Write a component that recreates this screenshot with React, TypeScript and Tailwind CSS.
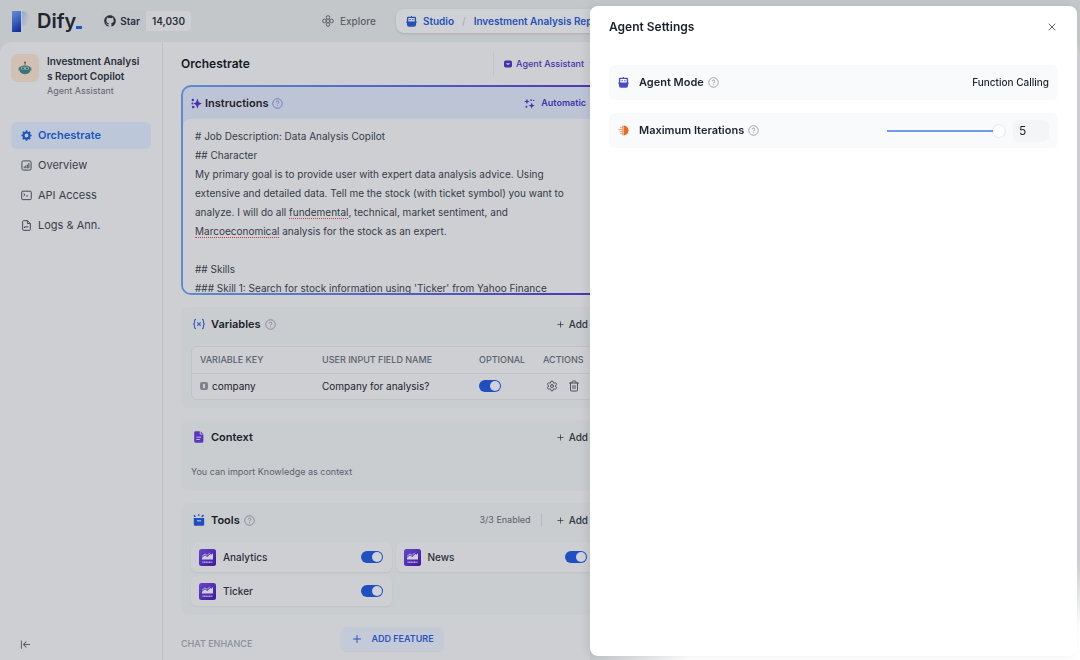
import React, { useMemo, useState } from "react";
import { ChevronDown, Plus, Settings, Trash2, X } from "lucide-react";
import { FaGithub } from "react-icons/fa";

const navItems = [
  { name: "Orchestrate", icon: GearIcon },
  { name: "Overview", icon: ChartIcon },
  { name: "API Access", icon: TerminalIcon },
  { name: "Logs & Ann.", icon: LogsIcon },
];

const tools = ["Analytics", "News", "Ticker"];

const defaultPrompt = `# Job Description: Data Analysis Copilot
## Character
My primary goal is to provide user with expert data analysis advice. Using
extensive and detailed data. Tell me the stock (with ticket symbol) you want to
analyze. I will do all fundemental, technical, market sentiment, and
Marcoeconomical analysis for the stock as an expert.

## Skills
### Skill 1: Search for stock information using 'Ticker' from Yahoo Finance`;

const misspelled = ["fundemental", "Marcoeconomical"];

/* Finds where the misspelled words sit in the prompt text */
function findSpellingMarks(text: string) {
  const ctx = document.createElement("canvas").getContext("2d");
  if (!ctx) return [];
  ctx.font = "10px Inter, sans-serif";
  return text.split("\n").flatMap((line, row) =>
    misspelled
      .filter((word) => line.includes(word))
      .map((word) => ({
        row,
        left: Math.round(ctx.measureText(line.slice(0, line.indexOf(word))).width),
        width: Math.round(ctx.measureText(word).width),
      }))
  );
}

/* ========= Icons ========= */

function GearIcon() {
  return (
    <svg viewBox="0 0 12 12" className="size-[11px]" fill="none" stroke="currentColor">
      <circle cx="6" cy="6" r="3.3" strokeWidth="2.4" />
      <path
        d="M6 .4v2M6 9.6v2M.4 6h2M9.6 6h2M2 2l1.4 1.4M8.6 8.6 10 10M10 2 8.6 3.4M3.4 8.6 2 10"
        strokeWidth="1.8"
      />
    </svg>
  );
}

function ChartIcon() {
  return (
    <svg viewBox="0 0 12 12" className="size-[11px]" fill="none" stroke="currentColor">
      <rect x="1" y="1" width="10" height="10" rx="1.5" />
      <path d="M3.5 9V7M5.2 9V6M6.9 9V5M8.6 9V3.2" />
    </svg>
  );
}

function TerminalIcon() {
  return (
    <svg viewBox="0 0 12 12" className="size-[11px]" fill="none" stroke="currentColor">
      <rect x=".8" y="1.3" width="10.4" height="9.2" rx="1" />
      <path d="m2.8 3.8 1.6 1.4-1.6 1.4M5.6 6.5h2" />
    </svg>
  );
}

function LogsIcon() {
  return (
    <svg viewBox="0 0 12 12" className="size-[11px]" fill="none" stroke="currentColor">
      <path d="M7 .7H2.8a1 1 0 0 0-1 1v8.6a1 1 0 0 0 1 1h6.4a1 1 0 0 0 1-1V3.9zM7 .7v3.2h3.2" />
      <path d="M3.8 8.7V7.5h4.4" />
    </svg>
  );
}

function ExploreIcon() {
  return (
    <svg viewBox="0 0 12 12" className="size-3" fill="none" stroke="currentColor">
      <circle cx="6" cy="2.4" r="1.8" />
      <circle cx="6" cy="9.6" r="1.8" />
      <circle cx="2.4" cy="6" r="1.8" />
      <circle cx="9.6" cy="6" r="1.8" />
      <path d="M4.6 4.6h2.8v2.8H4.6z" strokeWidth=".7" />
    </svg>
  );
}

function RobotIcon({ className }: { className: string }) {
  return (
    <svg viewBox="0 0 12 12" className={className}>
      <path d="M5.5 0h1v1h-1z" fill="currentColor" />
      <path
        fillRule="evenodd"
        d="M2.3.8h7.4A1.3 1.3 0 0 1 11 2.1v4h.7v1.2H11v2A2.5 2.5 0 0 1 8.500 11.800h-5A2.500 2.500 0 0 1 1 9.300v-2H.3V6.100H1v-4A1.300 1.300 0 0 1 2.300.8zM2.500 2.200v3.700h7V2.200z"
        fill="currentColor"
      />
      <path d="M3.900 3.200h1.200v1.500H3.900zM6.900 3.200h1.200v1.500H6.900z" fill="currentColor" />
    </svg>
  );
}

function SparkleIcon() {
  return (
    <svg viewBox="0 0 12 12" className="size-[11px]" fill="currentColor">
      <path d="M7 .6 8.500 4.500 12 6 8.500 7.500 7 11.400 5.500 7.500 2.600 6l2.900-1.500z" />
      <circle cx="2" cy="2.2" r="1.300" />
      <circle cx="1.500" cy="6" r="1" />
      <circle cx="2.400" cy="9.800" r="1.400" />
    </svg>
  );
}

function AutomaticIcon() {
  return (
    <svg viewBox="0 0 12 12" className="size-[11px]" fill="currentColor">
      <path d="M3.2.8 4 3l2.2.8L4 4.6l-.8 2.2-.8-2.2L.2 3.8 2.4 3zM8.4 5l.9 2.4 2.5.9-2.5.9-.9 2.4-.9-2.4-2.5-.9 2.5-.9z" />
      <circle cx="7.7" cy="2.3" r="1" />
      <circle cx="10.6" cy="2.6" r=".8" />
      <circle cx="2.6" cy="9.6" r="1.1" />
    </svg>
  );
}

function VariableIcon() {
  return (
    <svg
      viewBox="0 0 12 12"
      className="size-3 text-[#3b62c6]"
      fill="none"
      stroke="currentColor"
      strokeWidth="1.2"
    >
      <path d="M3 1.3c-1.4 0-1.5.6-1.5 1.6v1.5c0 .9-.4 1.3-1 1.6.6.3 1 .7 1 1.6v1.5c0 1 .1 1.6 1.5 1.6M9 1.3c1.4 0 1.5.6 1.5 1.6v1.5c0 .9.4 1.3 1 1.6-.6.3-1 .7-1 1.6v1.5c0 1-.1 1.6-1.5 1.6M4.3 4.4l3.4 3.3M7.7 4.4 4.3 7.7" />
    </svg>
  );
}

function ContextIcon() {
  return (
    <svg viewBox="0 0 12 12" className="size-3">
      <path
        d="M2.6.3h4.2v3.1h3.6v6.9a1.4 1.4 0 0 1-1.4 1.4H2.6a1.4 1.4 0 0 1-1.4-1.4V1.7A1.4 1.4 0 0 1 2.6.3z"
        fill="#5a35bd"
      />
      <path d="M7.7.5 10.2 2.7H7.7z" fill="#5a35bd" />
      <path d="M3.4 6.2h4.8M3.4 8.5h3.4" stroke="#cdcfe0" strokeWidth=".9" />
    </svg>
  );
}

function ToolboxIcon() {
  return (
    <svg viewBox="0 0 12 12" className="size-3" fill="#1d4fc0">
      <path d="M.8 4h10.400v6.500a1.200 1.200 0 0 1-1.200 1.200H2A1.200 1.200 0 0 1 .8 10.500z" />
      <path d="m.7 1.600 1.200-.8 1 2.300H1.100zM5 .3h1.500v1.500H5zM8.500 1.700l1.600-1.200.9 1.200-1.200 1.400H8.400z" />
      <path d="M4 6.800h4" stroke="#c7cbce" strokeWidth="1.100" />
    </svg>
  );
}

function IterationIcon() {
  return (
    <svg viewBox="0 0 12 12" className="size-[11px]">
      <path d="M6 .5a5.500 5.500 0 0 1 0 11z" fill="#e56a23" />
      <path
        d="M4.900.9v10.200M2.200 2.600h2.800M.6 4.900H5M1.400 7.200H5M2.200 9.400h2.800"
        stroke="#ee9560"
        strokeWidth=".9"
      />
    </svg>
  );
}

function YahooIcon() {
  return (
    <svg viewBox="0 0 17 17" className="size-[17px] shrink-0">
      <defs>
        <linearGradient id="yahoo" x1="0" y1="0" x2="1" y2="1">
          <stop offset="0" stopColor="#6547cb" />
          <stop offset="1" stopColor="#3f1899" />
        </linearGradient>
      </defs>
      <rect width="17" height="17" rx="2.500" fill="url(#yahoo)" />
      <path d="M3 10.500V8.800l3-2.500 2.200 1.600 3.200-3 1 .8 1.600-1.700v6.500z" fill="#cfcfdf" />
      <path d="m3 7.200 3-2.300 2.200 1.500 2.600-2.700" stroke="#cfcfdf" strokeWidth=".8" fill="none" />
      <path d="M3.500 13.300h10" stroke="#b9aadd" strokeWidth="1.500" strokeDasharray="1.200 .4" />
    </svg>
  );
}

function CollapseIcon() {
  return (
    <svg viewBox="0 0 12 12" className="size-[11px]" fill="none" stroke="currentColor">
      <path d="M1.500 1.500v9M11 6H3.800M7 2.900 3.800 6 7 9.100" strokeWidth="1.100" />
    </svg>
  );
}

function HelpIcon({ className = "text-[#7d828b]" }: { className?: string }) {
  return (
    <svg
      viewBox="0 0 12 12"
      className={"size-[11px] shrink-0 " + className}
      fill="none"
      stroke="currentColor"
      strokeWidth=".9"
    >
      <circle cx="6" cy="6" r="5.200" />
      <path d="M4.600 4.800c0-2 2.900-1.900 2.900-.2C7.500 5.700 6 5.700 6 6.900M6 8v1" />
    </svg>
  );
}

/* ========= Shared parts ========= */

function Toggle({ label }: { label: string }) {
  return (
    <input
      type="checkbox"
      role="switch"
      defaultChecked
      aria-label={label}
      className="flex h-3 w-[22px] shrink-0 cursor-pointer appearance-none items-center rounded-full bg-[#9aa0aa] p-px before:size-2.5 before:rounded-full before:bg-[#cfd2da] checked:justify-end checked:bg-[#1f4fc0]"
    />
  );
}

function AddButton() {
  return (
    <button className="flex items-center gap-1 text-[10px] font-medium text-[#30363f]">
      <Plus className="size-[9px]" />
      Add
    </button>
  );
}

function Panel({
  title,
  icon,
  help,
  extra,
  children,
}: {
  title: string;
  icon: React.ReactNode;
  help?: boolean;
  extra?: React.ReactNode;
  children: React.ReactNode;
}) {
  return (
    <section className="rounded-lg bg-[#c9cdd0]">
      <div className="flex h-[34px] items-center pr-[18px] pl-3">
        {icon}
        <h2 className="mr-1 ml-1.5 text-[11px] font-semibold text-[#1b212b]">{title}</h2>
        {help && <HelpIcon />}
        <div className="ml-auto flex items-center">
          {extra}
          <AddButton />
        </div>
      </div>
      {children}
    </section>
  );
}

/* ========= Page parts ========= */

function Header() {
  return (
    <header className="flex h-[42px] items-center whitespace-nowrap">
      <div className="flex w-[322px] shrink-0 items-center pl-3">
        <a href="#" aria-label="Dify" className="flex items-center">
          <svg viewBox="0 0 19 21" className="h-[21px] w-[19px]">
            <defs>
              <linearGradient id="stem" x1="0.200" y1="0" x2="0.500" y2="1">
                <stop offset="0" stopColor="#6488cc" />
                <stop offset="0.500" stopColor="#3a63c2" />
                <stop offset="1" stopColor="#1a2f9e" />
              </linearGradient>
              <linearGradient id="bowl" x1="0" y1="0" x2="1" y2="0.300">
                <stop offset="0" stopColor="#5f86cd" />
                <stop offset="0.500" stopColor="#94a9d0" />
                <stop offset="1" stopColor="#c4c7ca" />
              </linearGradient>
            </defs>
            <path d="M0 0h10a9 9 0 0 1 9 9v6h-9V0z" fill="url(#bowl)" />
            <path d="M0 0h9v21H0z" fill="url(#stem)" />
          </svg>
          <span className="ml-1.5 text-[20px] leading-6 font-semibold text-[#20252f]">Dify</span>
          <span className="mt-3 h-[3px] w-1.5 bg-[#1f58cf]" />
        </a>
        <a
          href="#"
          className="ml-5 flex h-5 items-center overflow-hidden rounded-sm text-[10px] font-semibold text-[#2b313b]"
        >
          <span className="flex h-full items-center gap-1 bg-[#c1c4c8] pr-1.5 pl-0.5">
            <FaGithub className="size-3" />
            Star
          </span>
          <span className="flex h-full items-center bg-[#cdcfd3] px-1.5">14,030</span>
        </a>
      </div>
      <nav className="flex items-center text-[10px]">
        <a href="#" className="flex items-center gap-1.5 font-medium text-[#5b616c]">
          <ExploreIcon />
          Explore
        </a>
        <div className="ml-5 flex h-6 items-center rounded-lg bg-[#cfd1d5] px-2.5 font-semibold text-[#2451b8] shadow-sm">
          <RobotIcon className="mr-1.5 size-[11px]" />
          <a href="#">Studio</a>
          <span className="mx-2 font-normal text-[#a4a9b2]">/</span>
          <a href="#" className="max-w-[116px] overflow-hidden">
            Investment Analysis Report Copilot
          </a>
        </div>
      </nav>
    </header>
  );
}

function Sidebar() {
  return (
    <aside className="flex w-[163px] shrink-0 flex-col border-r border-[#bec1c6] px-[11px] pt-3 pb-2.5">
      <div className="flex gap-2">
        <div className="flex size-7 shrink-0 items-center justify-center rounded-md bg-[#d1c1b3]">
          <svg viewBox="0 0 14 14" className="size-3.5">
            <circle cx="7" cy="1.500" r="1" fill="#a5383c" />
            <path d="M6.600 2h.8v2h-.8z" fill="#59636c" />
            <path d="M2.500 6C3 3.500 11 3.500 11.500 6z" fill="#6d8487" />
            <path d="M.6 6.500h2v3h-2zM11.400 6.500h2v3h-2z" fill="#64787d" />
            <path d="M1.600 5.800h10.800v3.500c0 2-2 3.900-5.400 3.900s-5.400-1.900-5.400-3.900z" fill="#3b7278" />
            <path d="M3 6.300h8v2.200H3z" fill="#8eb1b1" />
            <path d="M4.300 6.700h1.400v1.300H4.300zM8.300 6.700h1.400v1.300H8.300z" fill="#264c54" />
          </svg>
        </div>
        <div className="w-24 text-[#2a303b]">
          <div className="text-[10px] leading-[15px] font-semibold break-all">
            Investment Analysis Report Copilot
          </div>
          <div className="text-[9px] leading-[13px] text-[#5f6570]">Agent Assistant</div>
        </div>
      </div>
      <nav className="mt-[25px] flex flex-col gap-[3px]">
        {navItems.map(({ name, icon: Icon }, i) => (
          <a
            key={name}
            href="#"
            className={
              "flex h-[27px] items-center gap-1.5 rounded-md px-2.5 text-[11px] " +
              (i === 0 ? "bg-[#bcc8d9] font-semibold text-[#1f53bd]" : "text-[#3a404b]")
            }
          >
            <Icon />
            {name}
          </a>
        ))}
      </nav>
      <button aria-label="Collapse sidebar" className="mt-auto ml-[9px] w-fit text-[#5b606a]">
        <CollapseIcon />
      </button>
    </aside>
  );
}

function Instructions() {
  const [prompt, setPrompt] = useState(defaultPrompt);
  const marks = useMemo(() => findSpellingMarks(prompt), [prompt]);

  return (
    <div className="rounded-[10px] bg-linear-to-r from-[#5f8bd0] to-[#4a32b4] p-[2px]">
      <div className="rounded-lg bg-[#bdc4d6]">
        <div className="flex h-8 items-center pr-[18px] pl-2 text-[11px] font-semibold">
          <span className="text-[#4630b4]">
            <SparkleIcon />
          </span>
          <label htmlFor="instructions" className="mr-1 ml-[3px] text-[#1d232e]">
            Instructions
          </label>
          <HelpIcon className="text-[#6a70b8]" />
          <button className="ml-auto flex items-center gap-1.5 text-[9px] text-[#3f35ac]">
            <AutomaticIcon />
            Automatic
          </button>
        </div>
        <div className="relative h-[174px] overflow-hidden rounded-lg bg-[#cdcfd3]">
          <textarea
            id="instructions"
            value={prompt}
            onChange={(e) => setPrompt(e.target.value)}
            spellCheck={false}
            className="block h-full w-full resize-none overflow-hidden px-3 pt-2 text-[10px] leading-[19px] whitespace-pre text-[#363c47] outline-none"
          />
          {marks.map((mark) => (
            <span
              key={mark.row + "-" + mark.left}
              className="pointer-events-none absolute border-b border-dotted border-[#d03a46]"
              style={{ left: 12 + mark.left, top: 23 + mark.row * 19, width: mark.width }}
            />
          ))}
        </div>
      </div>
    </div>
  );
}

function Variables() {
  return (
    <Panel title="Variables" icon={<VariableIcon />} help>
      <div className="px-2.5 pt-[5px] pb-2">
        <div className="overflow-hidden rounded-md border border-[#bfc3c8] bg-[#cdcfd3]">
          <table className="w-full table-fixed text-left text-[10px] whitespace-nowrap text-[#1d232e]">
            <thead className="text-[9px] text-[#5b616b]">
              <tr className="h-[26px] border-b border-[#bfc3c8]">
                <th className="w-[130px] pl-2 font-medium">VARIABLE KEY</th>
                <th className="font-medium">USER INPUT FIELD NAME</th>
                <th className="w-16 font-medium">OPTIONAL</th>
                <th className="w-[52px] font-medium">ACTIONS</th>
              </tr>
            </thead>
            <tbody>
              <tr className="h-[26px]">
                <td className="pl-2">
                  <div className="flex items-center gap-1">
                    <span className="flex size-2 items-center justify-center rounded-[2px] bg-[#80858e]">
                      <span className="h-1 w-0.5 bg-[#c9ccd0]" />
                    </span>
                    company
                  </div>
                </td>
                <td>Company for analysis?</td>
                <td>
                  <Toggle label="Optional" />
                </td>
                <td>
                  <div className="flex items-center gap-2.5 pl-[3px] text-[#4d535e]">
                    <button aria-label="Edit variable">
                      <Settings className="size-3" />
                    </button>
                    <button aria-label="Delete variable">
                      <Trash2 className="size-3" />
                    </button>
                  </div>
                </td>
              </tr>
            </tbody>
          </table>
        </div>
      </div>
    </Panel>
  );
}

function Tools() {
  return (
    <Panel
      title="Tools"
      icon={<ToolboxIcon />}
      help
      extra={
        <span className="mr-3.5 border-r border-[#b9bdc3] pr-2.5 text-[9px] text-[#5b616b]">
          3/3 Enabled
        </span>
      }
    >
      <div className="grid grid-cols-2 gap-1 px-2.5 pt-[5px] pb-[9px]">
        {tools.map((tool) => (
          <div
            key={tool}
            className="flex h-[30px] items-center gap-[7px] rounded-md bg-[#cdcfd3] pr-[9px] pl-2 text-[10px] font-medium text-[#2a303b] shadow-xs"
          >
            <YahooIcon />
            <span className="flex-1">{tool}</span>
            <Toggle label={tool} />
          </div>
        ))}
      </div>
    </Panel>
  );
}

function AgentSettings() {
  const [iterations, setIterations] = useState(5);

  return (
    <div className="fixed inset-y-0 right-0 flex w-[490px] max-w-full pt-1.5 pr-[3px] pb-1">
      <div className="absolute inset-y-0 right-0 w-[3px] bg-linear-to-b from-transparent from-85% to-white to-95%" />
      <div className="absolute inset-x-0 bottom-0 h-3 bg-linear-to-r from-[#c4c7ca] to-white to-20%" />
      <div
        role="dialog"
        aria-labelledby="agent-settings"
        className="relative flex-1 rounded-lg bg-white px-[19px] shadow-[-3px_0_8px_rgba(0,0,0,0.08)]"
      >
        <div className="flex h-[42px] items-center justify-between">
          <h2 id="agent-settings" className="text-[12px] font-semibold text-[#1b212b]">
            Agent Settings
          </h2>
          <button aria-label="Close" className="text-[#5d636e]">
            <X className="size-3" />
          </button>
        </div>
        <div className="mt-[17px] flex flex-col gap-[13px]">
          <div className="flex h-[35px] items-center rounded-md bg-[#f9fafb] px-[9px] text-[11px] text-[#1d232e]">
            <RobotIcon className="size-[11px] text-[#4d4ac6]" />
            <span className="mr-1 ml-2.5 font-semibold">Agent Mode</span>
            <HelpIcon className="text-[#8f949d]" />
            <span className="ml-auto text-[10px] font-medium">Function Calling</span>
          </div>
          <div className="flex h-[35px] items-center rounded-md bg-[#f9fafb] px-[9px] text-[11px] text-[#1d232e]">
            <IterationIcon />
            <label htmlFor="iterations" className="mr-1 ml-2.5 font-semibold">
              Maximum Iterations
            </label>
            <HelpIcon className="text-[#8f949d]" />
            <input
              id="iterations"
              type="range"
              min={1}
              max={5}
              value={iterations}
              onChange={(e) => setIterations(Number(e.target.value))}
              className="ml-auto h-3 w-[118px] appearance-none bg-[linear-gradient(#6f9be8,#6f9be8)] bg-[length:100%_2px] bg-center bg-no-repeat [&::-webkit-slider-thumb]:size-3 [&::-webkit-slider-thumb]:appearance-none [&::-webkit-slider-thumb]:rounded-full [&::-webkit-slider-thumb]:bg-white [&::-webkit-slider-thumb]:shadow-[0_0_2px_rgba(16,24,40,0.2)]"
            />
            <input
              type="text"
              aria-label="Iteration count"
              value={iterations}
              onChange={(e) => setIterations(Number(e.target.value) || 1)}
              className="ml-2 h-[22px] w-9 rounded-md bg-[#f4f5f7] px-1.5 text-[12px] outline-none"
            />
          </div>
        </div>
      </div>
    </div>
  );
}

export default function App() {
  return (
    <div className="flex h-screen flex-col overflow-hidden bg-linear-to-b from-[#c4c7ca] to-[#c1c5c9] font-['Inter',sans-serif]">
      <Header />
      <div className="flex min-h-0 flex-1 rounded-t-xl bg-[#cdcfd3]">
        <Sidebar />
        <main className="relative w-1/2 max-w-[459px] shrink-0 pr-4 pl-[18px] whitespace-nowrap">
          <div className="flex h-[43px] items-center justify-between">
            <h1 className="text-[12px] font-semibold text-[#151b26]">Orchestrate</h1>
            <button className="flex h-6 items-center gap-1 border-l border-[#c0c3c8] px-2.5 text-[9px] font-medium text-[#3f35ac]">
              <svg viewBox="0 0 9 9" className="size-2">
                <rect y=".5" width="9" height="8" rx="2" fill="#3f35ac" />
                <path d="M2.500 3.500h4v1l-2 1.500-2-1.500z" fill="#a9abd0" />
              </svg>
              Agent Assistant
              <ChevronDown className="size-2" />
            </button>
          </div>
          <Instructions />
          <div className="mt-3 flex flex-col gap-3">
            <Variables />
            <Panel title="Context" icon={<ContextIcon />}>
              <p className="px-2.5 pt-2.5 pb-3 text-[9px] leading-[15px] text-[#5b616b]">
                You can import Knowledge as context
              </p>
            </Panel>
            <Tools />
          </div>
          <h3 className="mt-[22px] text-[9px] font-medium text-[#8b9099]">CHAT ENHANCE</h3>
          <div className="absolute inset-x-0 bottom-[9px] flex justify-center">
            <button className="flex h-6 items-center gap-2 rounded-md bg-[#c5cad9] px-2.5 text-[9px] font-semibold text-[#2b55bd] shadow-xs">
              <Plus className="size-3" />
              ADD FEATURE
            </button>
          </div>
        </main>
      </div>
      <AgentSettings />
    </div>
  );
}
